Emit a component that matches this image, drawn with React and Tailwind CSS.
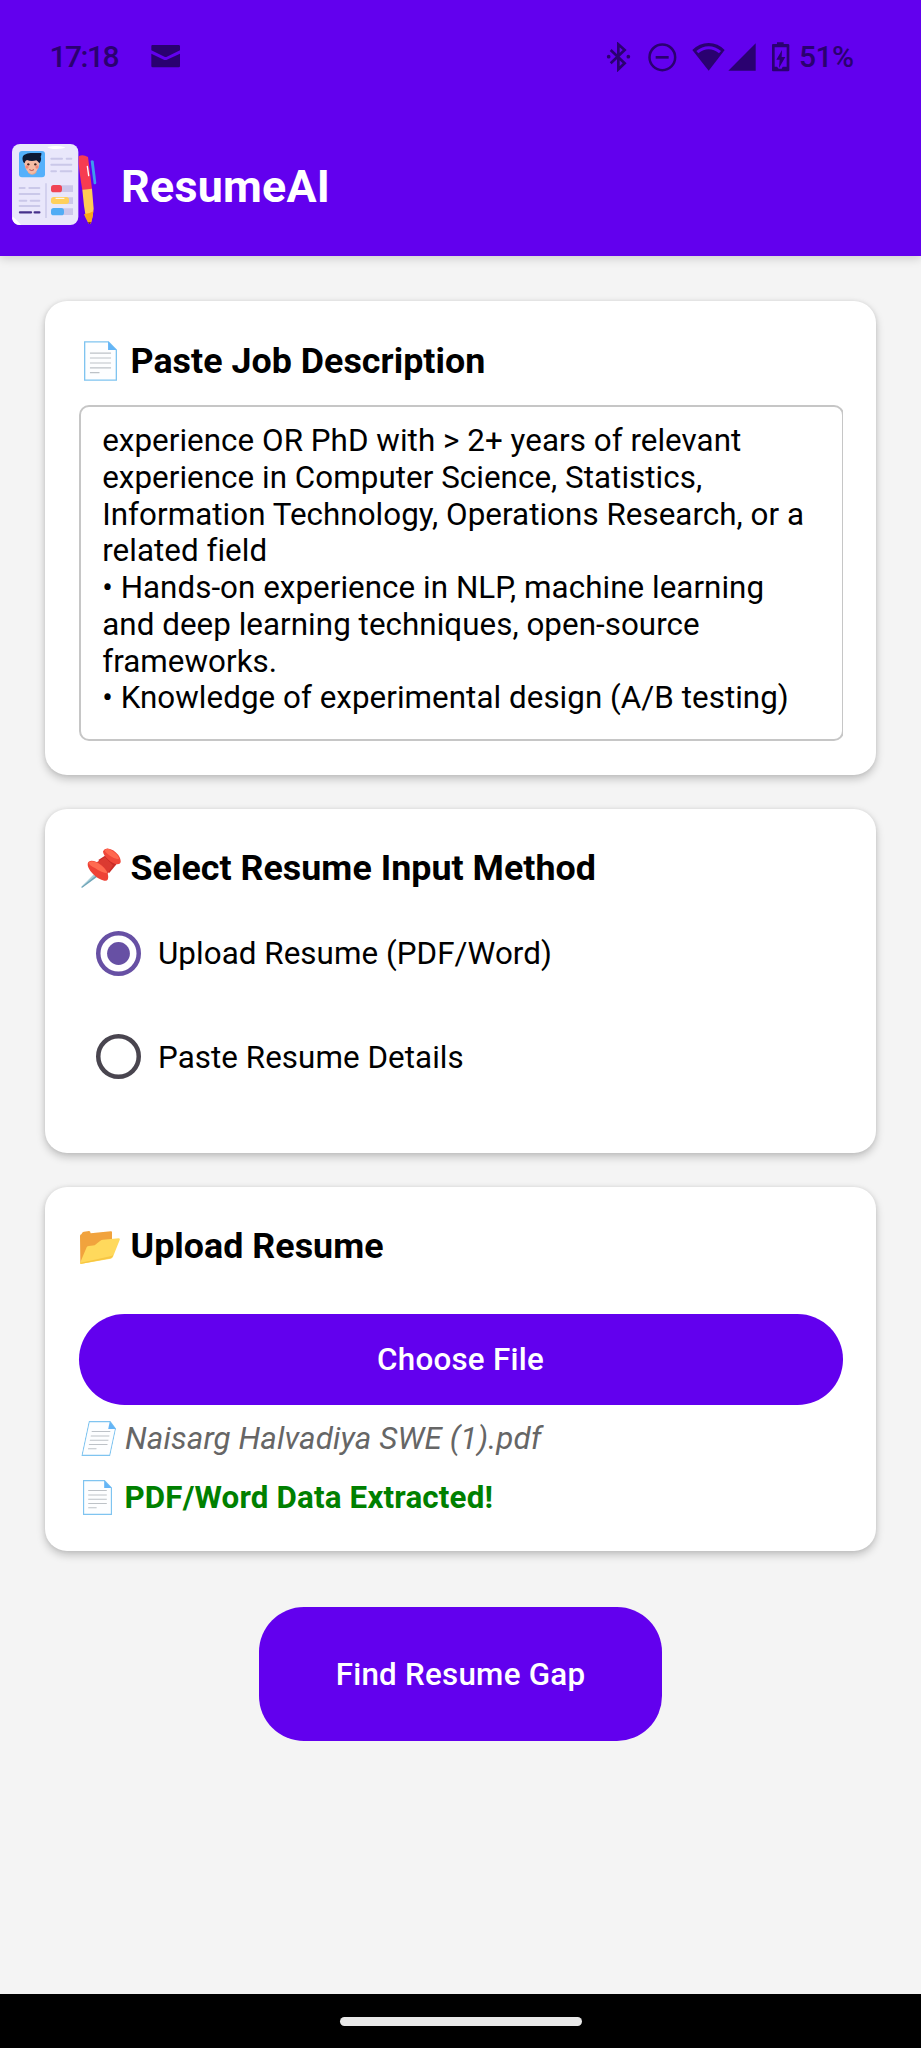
const INK = '#2a0170';

function MailIcon() {
  return (
    <svg className="ml-[33px] h-[23px] w-[29px]" viewBox="0 0 87 69">
      <path fill={INK} d="M4 0h79q4 0 4 4v12L46 36h-4L1 16V4q0-4 3-4zM1 26l39 19h6l41-19v37q0 4-4 4H5q-4 0-4-4z" />
    </svg>
  );
}

function BluetoothIcon() {
  return (
    <svg className="h-[30px] w-[25px]" viewBox="0 0 75 90">
      <path d="M14 24l42 40-19 18V7l19 17-42 40" fill="none" stroke={INK} strokeWidth="8" />
      <circle cx="8" cy="44" r="5.5" fill={INK} />
      <circle cx="67" cy="44" r="5.5" fill={INK} />
    </svg>
  );
}

function DoNotDisturbIcon() {
  return (
    <svg className="ml-[16px] h-[30px] w-[30px]" viewBox="0 0 90 90">
      <circle cx="46" cy="46" r="38.500" fill="none" stroke={INK} strokeWidth="7.500" />
      <path d="M26 46h39" stroke={INK} strokeWidth="8" />
    </svg>
  );
}

function WifiIcon() {
  return (
    <svg className="ml-[15px] h-[30px] w-[33px]" viewBox="0 0 99 90">
      <path d="M50 86L1 24Q22 3 50 3t48 21z" fill={INK} />
      <path d="M13 27Q30 13 50 13t37 14l-6 7Q66 22 50 22T19 34z" fill="#6200ee" />
    </svg>
  );
}

function SignalIcon() {
  return (
    <svg className="ml-[3px] h-[30px] w-[28px]" viewBox="0 0 84 90">
      <path d="M83 4v82H1z" fill={INK} />
    </svg>
  );
}

function BatteryIcon() {
  return (
    <svg className="ml-[15px] h-[30px] w-[20px]" viewBox="0 0 60 90">
      <path d="M18 6V1h20v5h13q4 0 4 4v75q0 3-4 3H6q-3 0-3-3V10q0-4 3-4z" fill={INK} />
      <path d="M11 16h36v58H35l-3 6h-9l-5-6h-7z" fill="#6200ee" />
      <path d="M33 24L16 53h10l-2 25 19-33H32z" fill={INK} />
    </svg>
  );
}

function StatusBar() {
  return (
    <div className="flex h-[113px] items-center pl-[49.5px] pr-[65px] text-[30px] font-medium leading-none text-[#2a0170]">
      <span className="w-[68px] whitespace-nowrap tracking-[-1.5px]">17:18</span>
      <MailIcon />
      <div className="ml-auto flex items-center">
        <BluetoothIcon />
        <DoNotDisturbIcon />
        <WifiIcon />
        <SignalIcon />
        <BatteryIcon />
        <span className="ml-[8px] w-[57px] whitespace-nowrap tracking-[-0.6px]">51%</span>
      </div>
    </div>
  );
}

function Logo() {
  return (
    <svg className="h-[82px] w-[86px]" viewBox="0 0 258 246">
      <rect x="0" y="0" width="199" height="243" rx="24" fill="#e9e7fb" />
      <path d="M3 218q14 12 24 25h-4Q4 243 0 222z" fill="#fff" />
      <path d="M106 9q28-6 54 1-5 5-27 5t-27-6z" fill="#fff" />
      <rect x="21" y="21" width="78" height="79" rx="9" fill="#54b0fb" />
      <path d="M48 76h25v10q-12 12-25 0z" fill="#e9a68c" />
      <path d="M38 48h43q4 3 1 13-4 24-23 29-17-5-21-27-4-11 0-15z" fill="#f5bca4" />
      <path d="M34 55q-6-15 2-22 10-6 20-6h32q1 9-2 11 4 10-4 20-4-6-9-9-15 5-28-1-6 1-7 10z" fill="#0c1835" />
      <circle cx="49" cy="61" r="3.500" fill="#45231f" />
      <circle cx="70" cy="61" r="3.500" fill="#45231f" />
      <circle cx="45" cy="69" r="5" fill="#f2887c" />
      <circle cx="75" cy="69" r="5" fill="#f2887c" />
      <path d="M52 77q7 5 14 0" fill="none" stroke="#b44e4d" strokeWidth="3" />
      <g stroke="#cac8e9" strokeWidth="6" strokeLinecap="round" fill="none">
        <path d="M118 44h32M164 44h14M118 62h60M118 82h14M146 82h32M23 132h15M52 132h30M23 150h59M23 170h20M56 170h26M23 186h59" />
      </g>
      <path d="M24 205h33M68 205h14" stroke="#46328b" strokeWidth="7" strokeLinecap="round" />
      <path d="M102 118v104" stroke="#c8c6e8" strokeWidth="4" />
      <path d="M140 124h43v20h-43zM140 160h43v20h-43zM140 193h43v20h-43z" fill="#cbc7ea" />
      <rect x="117" y="123" width="33" height="22" rx="8" fill="#f04455" />
      <rect x="117" y="159" width="54" height="21" rx="8" fill="#ffd05c" />
      <path d="M132 163h24" stroke="#fff" strokeWidth="3" strokeLinecap="round" />
      <rect x="117" y="192" width="39" height="22" rx="8" fill="#51acf5" />
      <path d="M236 51q4-5 9 0l8 66q-2 6-8 2z" fill="#3e9aee" />
      <path d="M200 37q12-7 28 2l12 97-29 2q-8-45-11-80z" fill="#f73c50" />
      <path d="M226 67l4 28" stroke="#fff" strokeWidth="4" strokeLinecap="round" />
      <path d="M211 137l29-3 5 60q-2 22-8 43-4 5-8 0-11-25-13-52z" fill="#ffcb55" />
      <path d="M216 211q15-1 28-9-2 20-7 35-4 5-8 0-9-15-13-26z" fill="#f8a719" />
      <path d="M228 235h9q-4 10-9 0z" fill="#592126" />
    </svg>
  );
}

function PageIcon({ className }) {
  return (
    <svg className={className} viewBox="0 0 100 120">
      <path d="M2 2h72l24 25v91H2z" fill="#fdfeff" stroke="#7fc4f0" strokeWidth="4" />
      <path d="M73 1l26 26H73z" fill="#64b5f6" />
      <path d="M18 36h64M18 51h64M18 66h64M18 81h64M18 95h29" stroke="#bdc2c7" strokeWidth="3.500" />
    </svg>
  );
}

function PinIcon() {
  return (
    <svg className="ml-[2px] h-[40px] w-[40px]" viewBox="0 0 120 120">
      <path d="M43 78l8 7-47 34-4-1z" fill="#6fa5b8" />
      <path d="M40 77l6 5L0 118z" fill="#a8ced9" />
      <path d="M52 36l34-22 23 32-25 30z" fill="#c92b27" />
      <path d="M47 43l25-15 24 24-20 30z" fill="#db3a31" />
      <path d="M20 47q4-14 27-5 30 15 34 38 4 20-11 18-18-2-36-22-15-17-14-29z" fill="#ee4136" />
      <path d="M22 44q9-10 30 2 24 16 27 30-17-1-36-15Q23 50 22 44z" fill="#ff6a50" />
      <path d="M66 10Q72-3 89 4q18 7 27 24 9 20-7 21-12-1-27-14Q66 22 66 10z" fill="#f0473a" />
      <path d="M71 7q7-10 22 1 19 12 21 24-11 3-26-8Q72 14 71 7z" fill="#ff674f" />
    </svg>
  );
}

function FolderIcon() {
  return (
    <svg className="ml-[1px] mt-[3px] h-[33px] w-[40px]" viewBox="0 0 120 99">
      <path d="M0 15q0-4 4-5l4-6q1-2 4-2l15-2q4 0 5 7l60-6q4-1 4 3v50L1 97z" fill="#f1a33d" />
      <path d="M0 96l20-47q2-4 7-4l17-2 17-14q4-3 8-3l47-4q5 0 3 5l-20 50q-2 5-7 6L5 98q-5 1-5-2z" fill="#ffd95c" />
      <path d="M3 95l88-19q6-1 8-5l-1 5q-2 5-7 6L5 98q-5 1-5-2z" fill="#f7c643" />
    </svg>
  );
}

function Card({ className, children }) {
  return (
    <section
      className={
        'rounded-[22px] bg-white pl-[33.5px] pr-[33.5px] pt-[38.8px] shadow-[0_4px_8px_rgba(0,0,0,0.21),0_0_4px_rgba(0,0,0,0.08)] ' +
        className
      }
    >
      {children}
    </section>
  );
}

function CardTitle({ icon, children }) {
  return (
    <h2 className="flex h-[42px] items-center whitespace-nowrap text-[35.8px] font-bold leading-[42px] tracking-[0.03px]">
      <span className="flex w-[52px] shrink-0 items-center">{icon}</span>
      {children}
    </h2>
  );
}

function Radio({ checked, label }) {
  return (
    <div className="flex h-[103.4px] items-center pl-[17.5px]">
      <svg className="size-[45px]" viewBox="0 0 45 45">
        <circle cx="22.500" cy="22.500" r="20.250" fill="none" stroke={checked ? '#6750a4' : '#49454f'} strokeWidth="4.500" />
        {checked && <circle cx="22.500" cy="22.500" r="11.400" fill="#6750a4" />}
      </svg>
      <span className="ml-[17px] mt-[1px] whitespace-nowrap text-[31.34px] tracking-[0.06px]">{label}</span>
    </div>
  );
}

const LINES = [
  'experience OR PhD with > 2+ years of relevant',
  'experience in Computer Science, Statistics,',
  'Information Technology, Operations Research, or a',
  'related field',
  '• Hands-on experience in NLP, machine learning',
  'and deep learning techniques, open-source',
  'frameworks.',
  '• Knowledge of experimental design (A/B testing)',
];

export default function App() {
  return (
    <div className="flex h-[2048px] w-[921px] flex-col overflow-hidden bg-[#f4f4f4] font-['Roboto',sans-serif] text-black">
      <header className="h-[256px] shrink-0 bg-[#6200ee] shadow-[0_3px_9px_rgba(0,0,0,0.15)]">
        <StatusBar />
        <div className="flex h-[143px] items-center pl-[12px]">
          <Logo />
          <h1 className="mt-[4px] ml-[23px] text-[44.8px] font-bold leading-[52px] tracking-[0.25px] text-white">ResumeAI</h1>
        </div>
      </header>

      <main className="flex flex-1 flex-col px-[45px] pt-[45px]">
        <Card className="h-[474px] shrink-0">
          <CardTitle icon={<PageIcon className="ml-[5px] h-[40px] w-[33px]" />}>Paste Job Description</CardTitle>
          <div className="mt-[23.7px] overflow-hidden">
            <div className="h-[336px] w-[765px] rounded-[10px] border-2 border-[#c6c6c6] pl-[21.7px] pt-[15.8px]">
              {LINES.map((line) => (
                <p key={line} className="whitespace-nowrap text-[31.34px] leading-[36.7px] tracking-[0.05px]">
                  {line}
                </p>
              ))}
            </div>
          </div>
        </Card>

        <Card className="mt-[33.7px] h-[344px] shrink-0">
          <CardTitle icon={<PinIcon />}>Select Resume Input Method</CardTitle>
          <div className="mt-[12.2px]">
            <Radio checked label="Upload Resume (PDF/Word)" />
            <Radio label="Paste Resume Details" />
          </div>
        </Card>

        <Card className="mt-[34px] h-[364.6px] shrink-0">
          <CardTitle icon={<FolderIcon />}>Upload Resume</CardTitle>
          <button className="mt-[46.6px] flex h-[90.5px] w-full items-center justify-center rounded-full bg-[#6200ee] pt-[1px] text-[31.34px] font-medium tracking-[0.25px] text-white">
            Choose File
          </button>
          <p className="mt-[11.8px] flex h-[44px] items-center whitespace-nowrap text-[31.34px] italic tracking-[0.12px] text-[#666]">
            <span className="flex w-[46.5px] shrink-0 pl-[6px]">
              <PageIcon className="h-[35px] w-[29px] -skew-x-12" />
            </span>
            Naisarg Halvadiya SWE (1).pdf
          </p>
          <p className="mt-[14.7px] flex h-[44px] items-center whitespace-nowrap text-[31.34px] font-bold tracking-[0.16px] text-[#008000]">
            <span className="flex w-[46px] shrink-0 pl-[4.5px]">
              <PageIcon className="h-[35px] w-[29px]" />
            </span>
            PDF/Word Data Extracted!
          </p>
        </Card>

        <button className="mt-[55.7px] flex h-[134.5px] w-[402.5px] shrink-0 items-center justify-center self-center rounded-[45px] bg-[#6200ee] pt-[1px] text-[31.34px] font-medium tracking-[0.25px] text-white">
          Find Resume Gap
        </button>
      </main>

      <footer className="flex h-[54px] shrink-0 justify-center bg-black pt-[22.5px]">
        <div className="h-[9px] w-[242px] rounded-full bg-[#e8e8e8]" />
      </footer>
    </div>
  );
}
